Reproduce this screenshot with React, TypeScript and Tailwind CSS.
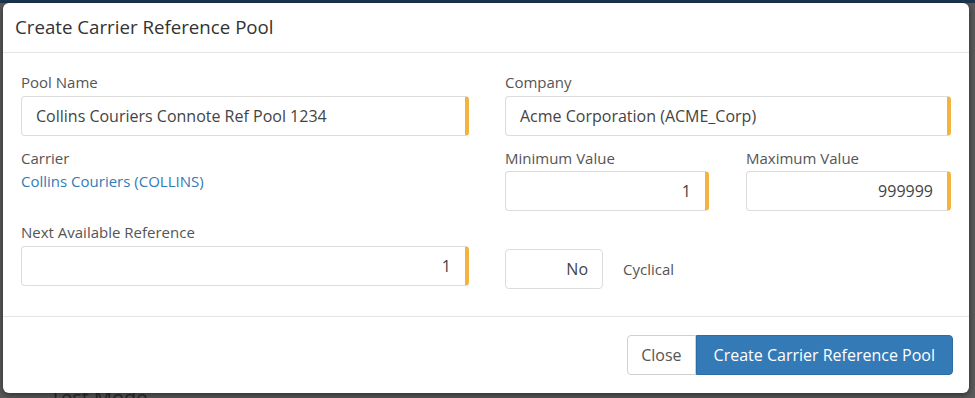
import React from 'react';

const Label = ({ children }: { children: React.ReactNode }) => (
  <div className="h-5 text-[15px] leading-5 text-[#555]">{children}</div>
);

const Field = ({ value, align = 'left', className = '' }: { value: string; align?: 'left' | 'right'; className?: string }) => (
  <div
    className={`mt-1 flex h-[40px] items-center rounded border border-[#dcdcdc] border-r-4 border-r-[#f3b43f] bg-white px-[14px] text-[16px] text-[#444] ${
      align === 'right' ? 'justify-end' : 'justify-start'
    } ${className}`}
  >
    {value}
  </div>
);

export default function App() {
  return (
    <div className="relative h-[398px] w-[975px] overflow-hidden bg-[#5a5a5a] font-['Open_Sans',sans-serif]">
      {/* page behind the overlay */}
      <div className="absolute left-0 top-0 h-[3px] w-full bg-[#1c3550]" />
      <div className="absolute left-[50px] top-[383px] text-[20px] text-[#2a2a2a]">Test Mode</div>

      {/* modal */}
      <div className="absolute left-[3px] top-[3px] flex h-[390px] w-[966px] flex-col rounded-md bg-white shadow-[0_2px_6px_rgba(0,0,0,0.5)]">
        <div className="flex h-[50px] items-center border-b border-[#e5e5e5] pl-[12px] text-[18.7px] text-[#333]">
          Create Carrier Reference Pool
        </div>

        <div className="flex h-[264px] gap-[36px] border-b border-[#e5e5e5] px-[18px] pt-[19px]">
          {/* left column */}
          <div className="flex w-[448px] flex-col">
            <Label>Pool Name</Label>
            <Field value="Collins Couriers Connote Ref Pool 1234" />
            <div className="mt-3">
              <Label>Carrier</Label>
              <div className="mt-[3px] text-[15px] leading-5 text-[#337ab7]">Collins Couriers (COLLINS)</div>
            </div>
            <div className="mt-[31px]">
              <Label>Next Available Reference</Label>
              <Field value="1" align="right" />
            </div>
          </div>

          {/* right column */}
          <div className="flex w-[446px] flex-col">
            <Label>Company</Label>
            <Field value="Acme Corporation (ACME_Corp)" />
            <div className="mt-3 flex gap-[37px]">
              <div className="w-[204px]">
                <Label>Minimum Value</Label>
                <div className="mt-[-1px]">
                  <Field value="1" align="right" />
                </div>
              </div>
              <div className="w-[205px]">
                <Label>Maximum Value</Label>
                <div className="mt-[-1px]">
                  <Field value="999999" align="right" />
                </div>
              </div>
            </div>
            <div className="mt-[38px] flex items-center gap-5">
              <div className="flex h-[40px] w-[98px] items-center justify-end rounded border border-[#dcdcdc] pr-[14px] text-[16px] text-[#444]">
                No
              </div>
              <div className="text-[15px] text-[#555]">Cyclical</div>
            </div>
          </div>
        </div>

        <div className="flex flex-1 items-start justify-end pr-[16px] pt-[18px]">
          <div className="flex h-[40px]">
            <button className="h-full rounded-l border border-[#d0d0d0] bg-white px-[13px] text-[16px] text-[#555]">
              Close
            </button>
            <button className="h-full rounded-r border border-[#2e6da4] bg-[#337ab7] px-[17px] text-[16px] text-white">
              Create Carrier Reference Pool
            </button>
          </div>
        </div>
      </div>
    </div>
  );
}
